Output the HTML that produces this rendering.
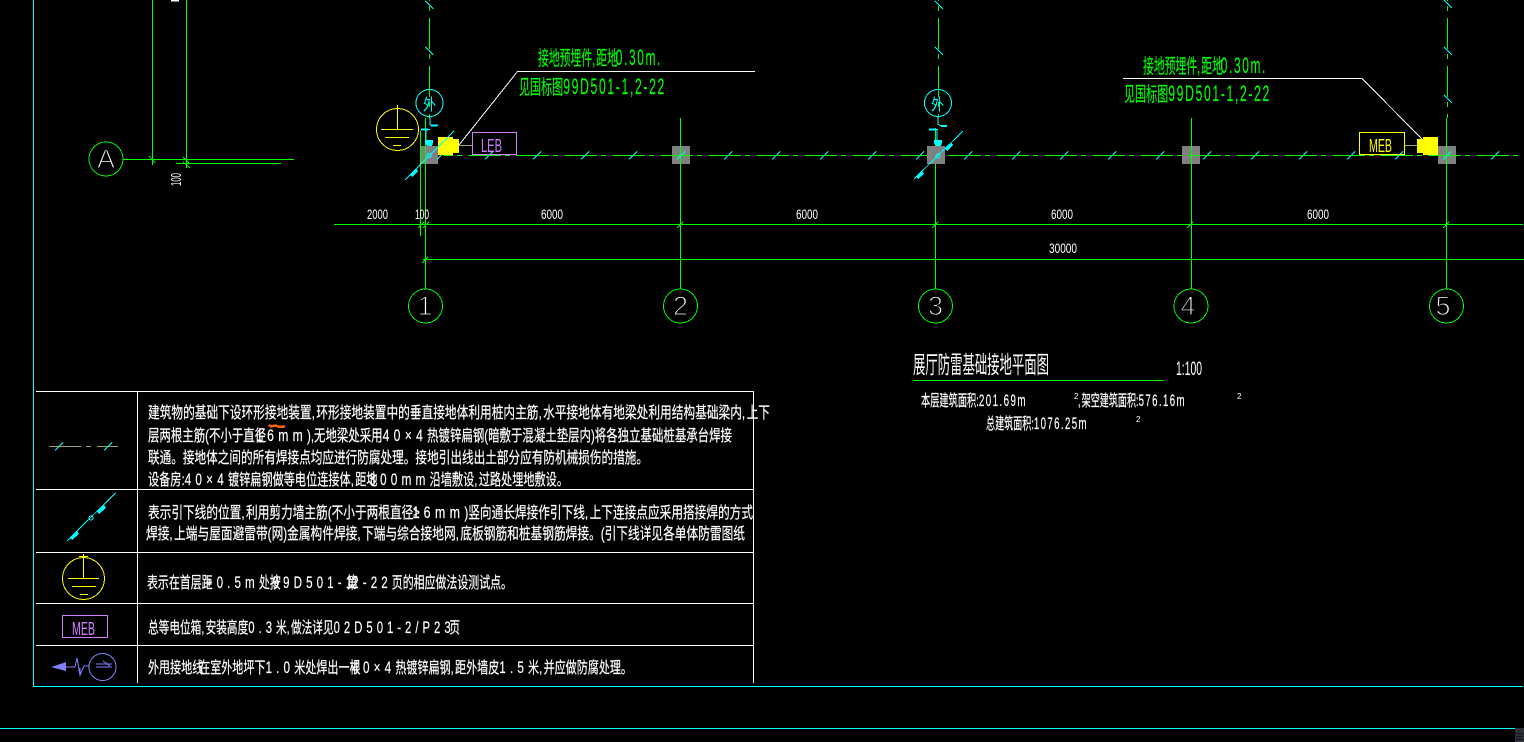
<!DOCTYPE html>
<html lang="zh">
<head>
<meta charset="utf-8">
<title>展厅防雷基础接地平面图</title>
<style>
html,body{margin:0;padding:0;background:#000;width:1524px;height:742px;overflow:hidden}
svg{display:block;position:absolute;left:0;top:0}
text{font-family:"Liberation Sans","Noto Sans CJK SC",sans-serif;white-space:pre}
.t{fill:#fff;font-size:16px;stroke:#fff;stroke-width:.2px}
.g{fill:#0f0;font-size:20px;stroke:#0f0;stroke-width:.15px}
.d{fill:#fff;font-size:14px}
.n{fill:#fff;font-size:27px;stroke:#000;stroke-width:1.2px;paint-order:fill stroke;text-anchor:middle}
.l{letter-spacing:6px;font-size:17px}
.s{letter-spacing:2.5px;font-size:17px}
.h{letter-spacing:3px;font-size:22px}
.c{letter-spacing:2px}
</style>
</head>
<body>
<svg width="1524" height="742" viewBox="0 0 1524 742" xmlns="http://www.w3.org/2000/svg" fill="none" shape-rendering="crispEdges">
<rect width="1524" height="742" fill="#000"/>

<!-- gray columns -->
<g fill="#808080">
<rect x="420" y="146" width="18" height="18"/>
<rect x="672" y="146" width="18" height="18"/>
<rect x="1182" y="146" width="18" height="18"/>
<rect x="1438" y="146" width="18" height="18"/>
</g>

<g stroke-width="1">
<!-- cyan frame -->
<path d="M33.5 0V686.5H1523M0 728.5H1515" stroke="#0ff"/>
<!-- green lines -->
<path stroke="#0f0" d="M152.5 0V165M186.5 0V168M123 159.5H294M176 163.5H281
M425.5 118V289M420.5 131V236M680.5 118V289M935.5 128V289M1191.5 118V289M1446.5 118V289
M334 224.5H1523M423 259.5H1524M913 380.5H1164"/>
<path stroke="#0f0" stroke-dasharray="33 4 5 6" stroke-dashoffset="24" d="M444 155.5H1518"/>
<path stroke="#0f0" stroke-dasharray="31 5 5 7" stroke-dashoffset="30" d="M429.5 0V118M938.5 0V118M1447.5 0V118"/>
<!-- table -->
<path stroke="#fff" d="M36 391.5H753M36 489.5H753M36 552.5H753M36 603.5H753M36 645.5H753M137.5 391V683M753.5 391V683"/>
<!-- olive -->
<path stroke="#a0a060" d="M459 145.5H472M1405 145.5H1417"/>
<path stroke="#a0a060" d="M49 446.5H81M86 446.5H91M97 446.5H118"/>
</g>

<rect x="927" y="146" width="18" height="18" fill="#808080"/>

<!-- dimension tick marks -->
<path stroke="#0f0" d="M149 156l6 7M183 157l7 7M183 162l7 6M418 228l6-6M423 228l6-6M677 228l6-6M932 228l6-6M1187 228l6-6M1443 228l6-6M422 263l6-6"/>

<!-- cyan ticks on horizontal axis -->
<path stroke="#0ff" d="M437 159.500l8-8M485 159.500l8-8M533 159.500l8-8M581 159.500l8-8M629 159.500l8-8M677 159.500l8-8M724 159.500l8-8M772 159.500l8-8M820 159.500l8-8M868 159.500l8-8M916 159.500l8-8M964 159.500l8-8M1012 159.500l8-8M1060 159.500l8-8M1108 159.500l8-8M1156 159.500l8-8M1203 159.500l8-8M1251 159.500l8-8M1299 159.500l8-8M1347 159.500l8-8M1395 159.500l8-8M1443 159.500l8-8M1491 159.500l8-8"/>
<!-- cyan ticks on vertical axes -->
<path stroke="#0ff" d="M425.500 1l8 8M425.500 47l8 8M935 1l8 8M935 47l8 8M1444 0l8 8M1444 47l8 8M1444 95l8 8M55 450.500l8-8M104 450.500l8-8"/>

<!-- yellow blobs -->
<path fill="#ff0" d="M438 137h15v2h6v14h-6v2h-15zM1438 137h-15v2h-6v14h6v2h15z"/>

<!-- LEB / MEB boxes -->
<rect x="472.500" y="132.500" width="44" height="22" stroke="#d080ff"/>
<rect x="1359.500" y="132.500" width="45" height="22" stroke="#ff0"/>
<rect x="62.500" y="615.500" width="45" height="22" stroke="#d080ff"/>
<text x="481" y="152" textLength="21" lengthAdjust="spacingAndGlyphs" style="font-size:18px;fill:#d080ff">LEB</text>
<text x="1369" y="152" textLength="23" lengthAdjust="spacingAndGlyphs" style="font-size:18px;fill:#ff0">MEB</text>
<text x="72" y="635" textLength="23" lengthAdjust="spacingAndGlyphs" style="font-size:18px;fill:#d080ff">MEB</text>

<!-- leaders -->
<path stroke="#fff" d="M755 71.500H517.500L459 145M1123 78.500H1362L1422 139"/>

<!-- grid bubbles -->
<g stroke="#0f0">
<circle cx="106" cy="159" r="17"/>
<circle cx="425.500" cy="306" r="17"/>
<circle cx="680.500" cy="306" r="17"/>
<circle cx="935.500" cy="306" r="17"/>
<circle cx="1191" cy="306" r="17"/>
<circle cx="1446.500" cy="306" r="17"/>
</g>
<text class="n" x="106" y="168">A</text>
<text class="n" x="425" y="315">1</text>
<text class="n" x="680.500" y="315">2</text>
<text class="n" x="935.500" y="315">3</text>
<text class="n" x="1188" y="315">4</text>
<text class="n" x="1443" y="315">5</text>

<!-- ground symbol -->
<g stroke="#ff0">
<circle cx="397.500" cy="129.500" r="21"/>
<path d="M397.500 105V129.500M381 129.500H413M385 137.500H409M393 145.500H401"/>
<circle cx="83.500" cy="578.500" r="21"/>
<path d="M83.500 554V578.500M68 578.500H99M72 586.500H96M80 594.500H88M79 556.500H88"/>
</g>

<!-- down conductor symbols -->
<g stroke="#0ff">
<circle cx="429.500" cy="103" r="13.500"/>
<circle cx="938" cy="103" r="13.500"/>
<path d="M405 180L454 131M914 179L963 131M67 541L115.500 493"/>
<circle cx="429" cy="155.500" r="2"/>
<circle cx="938" cy="156" r="2"/>
<circle cx="91" cy="518" r="2"/>
<path d="M430 117V125H438M438 125.500H437M421 129.500H430M426 129V141M938 117V124L940 125.500H947M929 129.500H938M937 129V141" />
<path stroke-width="2" d="M431 125.500H437M421 129.500H428M941 126H947M929 129.500H936"/>
</g>
<g fill="#0ff">
<path d="M425 140h8v3l-1 3h-5l-2-3zM934 140h8v3l-1 3h-5l-2-3z"/>
<path d="M410 175l6-6 2 2-6 6zM916 177l6-6 2 3-6 5zM945 149l6-6 2 2-6 6zM70 538l7-7 2 3-7 6zM97 512l7-7 2 3-7 6z"/>
</g>
<text x="423" y="110" textLength="13" lengthAdjust="spacingAndGlyphs" style="font-size:16px;fill:#0ff">外</text>
<text x="931" y="110" textLength="13" lengthAdjust="spacingAndGlyphs" style="font-size:16px;fill:#0ff">外</text>

<!-- external earth symbol -->
<g stroke="#8080ff">
<circle cx="102.500" cy="667" r="13.500"/>
<path d="M66 667H75L77 658L80 675L84 666H89M80 668V676M96 664H112M96 667H112M103 661L110 666"/>
</g>
<path fill="#8080ff" d="M51 667L66 662V671Z"/>

<!-- orange mark -->
<path d="M269 425q2 2 4 1t4 0 4 1 4-1" stroke="#ff6600" stroke-width="2.500"/>

<!-- green annotations -->
<text class="g" x="538" y="65" textLength="124" lengthAdjust="spacingAndGlyphs">接地预埋件<tspan class="c">,</tspan>距地<tspan class="h" dx="-4">0.30m.</tspan></text>
<text class="g" x="519" y="94" textLength="147" lengthAdjust="spacingAndGlyphs">见国标图<tspan class="h">99D501-1,2-22</tspan></text>
<text class="g" x="1143" y="73" textLength="124" lengthAdjust="spacingAndGlyphs">接地预埋件<tspan class="c">,</tspan>距地<tspan class="h" dx="-4">0.30m.</tspan></text>
<text class="g" x="1124" y="101" textLength="147" lengthAdjust="spacingAndGlyphs">见国标图<tspan class="h">99D501-1,2-22</tspan></text>

<!-- dimensions -->
<text class="d" x="367" y="219" textLength="21" lengthAdjust="spacingAndGlyphs">2000</text>
<text class="d" x="415" y="219" textLength="14" lengthAdjust="spacingAndGlyphs">100</text>
<text class="d" x="541" y="219" textLength="22" lengthAdjust="spacingAndGlyphs">6000</text>
<text class="d" x="796" y="219" textLength="22" lengthAdjust="spacingAndGlyphs">6000</text>
<text class="d" x="1051" y="219" textLength="22" lengthAdjust="spacingAndGlyphs">6000</text>
<text class="d" x="1307" y="219" textLength="22" lengthAdjust="spacingAndGlyphs">6000</text>
<text class="d" x="1049" y="253" textLength="28" lengthAdjust="spacingAndGlyphs">30000</text>
<text class="d" transform="translate(181 186) rotate(-90)" textLength="13" lengthAdjust="spacingAndGlyphs" style="font-size:15px">100</text>
<rect x="171" y="0" width="8" height="1.500" fill="#fff"/>

<!-- title -->
<text x="913" y="373" textLength="136" lengthAdjust="spacingAndGlyphs" style="font-size:24px;fill:#fff">展厅防雷基础接地平面图</text>
<text x="1176" y="375" textLength="26" lengthAdjust="spacingAndGlyphs" style="font-size:19px;fill:#fff">1:100</text>
<text class="t" x="921" y="406" textLength="106" lengthAdjust="spacingAndGlyphs">本层建筑面积:<tspan class="s">201.69m</tspan></text>
<text x="1074" y="399" style="font-size:8px;fill:#fff">2</text>
<text class="t" x="1078" y="406" textLength="108" lengthAdjust="spacingAndGlyphs"><tspan class="c">,</tspan>架空建筑面积:<tspan class="s">576.16m</tspan></text>
<text x="1237" y="399" style="font-size:8px;fill:#fff">2</text>
<text class="t" x="986" y="429" textLength="102" lengthAdjust="spacingAndGlyphs">总建筑面积:<tspan class="s">1076.25m</tspan></text>
<text x="1136" y="422" style="font-size:8px;fill:#fff">2</text>

<!-- table text -->
<text class="t" x="148" y="418" textLength="622" lengthAdjust="spacingAndGlyphs">建筑物的基础下设环形接地装置<tspan class="c">,</tspan>环形接地装置中的垂直接地体利用桩内主筋<tspan class="c">,</tspan>水平接地体有地梁处利用结构基础梁内<tspan class="c">,</tspan>上下</text>
<text class="t" x="148" y="441" textLength="584" lengthAdjust="spacingAndGlyphs">层两根主筋(不小于直径<tspan class="l" dx="-14">16mm</tspan>),无地梁处采用<tspan class="l">40×4</tspan>热镀锌扁钢(暗敷于混凝土垫层内)将各独立基础桩基承台焊接</text>
<text class="t" x="148" y="463" textLength="500" lengthAdjust="spacingAndGlyphs">联通。接地体之间的所有焊接点均应进行防腐处理。接地引出线出土部分应有防机械损伤的措施。</text>
<text class="t" x="148" y="485" textLength="420" lengthAdjust="spacingAndGlyphs">设备房:<tspan class="l">40×4</tspan>镀锌扁钢做等电位连接体<tspan class="c">,</tspan>距地<tspan class="l" dx="-12">300mm</tspan>沿墙敷设<tspan class="c">,</tspan>过路处埋地敷设。</text>
<text class="t" x="148" y="518" textLength="605" lengthAdjust="spacingAndGlyphs">表示引下线的位置<tspan class="c">,</tspan>利用剪力墙主筋(不小于两根直径≥<tspan class="l" dx="-10">16mm</tspan>)竖向通长焊接作引下线<tspan class="c">,</tspan>上下连接点应采用搭接焊的方式</text>
<text class="t" x="146" y="539" textLength="599" lengthAdjust="spacingAndGlyphs">焊接<tspan class="c">,</tspan>上端与屋面避雷带(网)金属构件焊接<tspan class="c">,</tspan>下端与综合接地网<tspan class="c">,</tspan>底板钢筋和桩基钢筋焊接。(引下线详见各单体防雷图纸</text>
<text class="t" x="147" y="588" textLength="365" lengthAdjust="spacingAndGlyphs">表示在首层距<tspan class="l" dx="-10">+0.5m</tspan>处按<tspan class="l" dx="-12">99D501-1</tspan><tspan dx="-14">第</tspan><tspan class="l" dx="-8">2-22</tspan>页的相应做法设测试点。</text>
<text class="t" x="148" y="633" textLength="312" lengthAdjust="spacingAndGlyphs">总等电位箱<tspan class="c">,</tspan>安装高度<tspan class="l">0.3</tspan>米<tspan class="c">,</tspan>做法详见<tspan class="l">02D501-2/P23</tspan><tspan dx="-8">页</tspan></text>
<text class="t" x="148" y="673" textLength="484" lengthAdjust="spacingAndGlyphs">外甩接地线<tspan dx="-6">在</tspan>室外地坪下<tspan class="l">1.0</tspan>米处焊出一根<tspan class="l" dx="-12">40×4</tspan>热镀锌扁钢<tspan class="c">,</tspan>距外墙皮<tspan class="l">1.5</tspan>米<tspan class="c">,</tspan>并应做防腐处理。</text>

<!-- resize grip -->
<rect x="1515" y="728" width="9" height="14" fill="#2c3038"/>
<path d="M1516 733.500h7M1516 736.500h7M1516 739.500h7" stroke="#14161a"/>
</svg>
</body>
</html>
